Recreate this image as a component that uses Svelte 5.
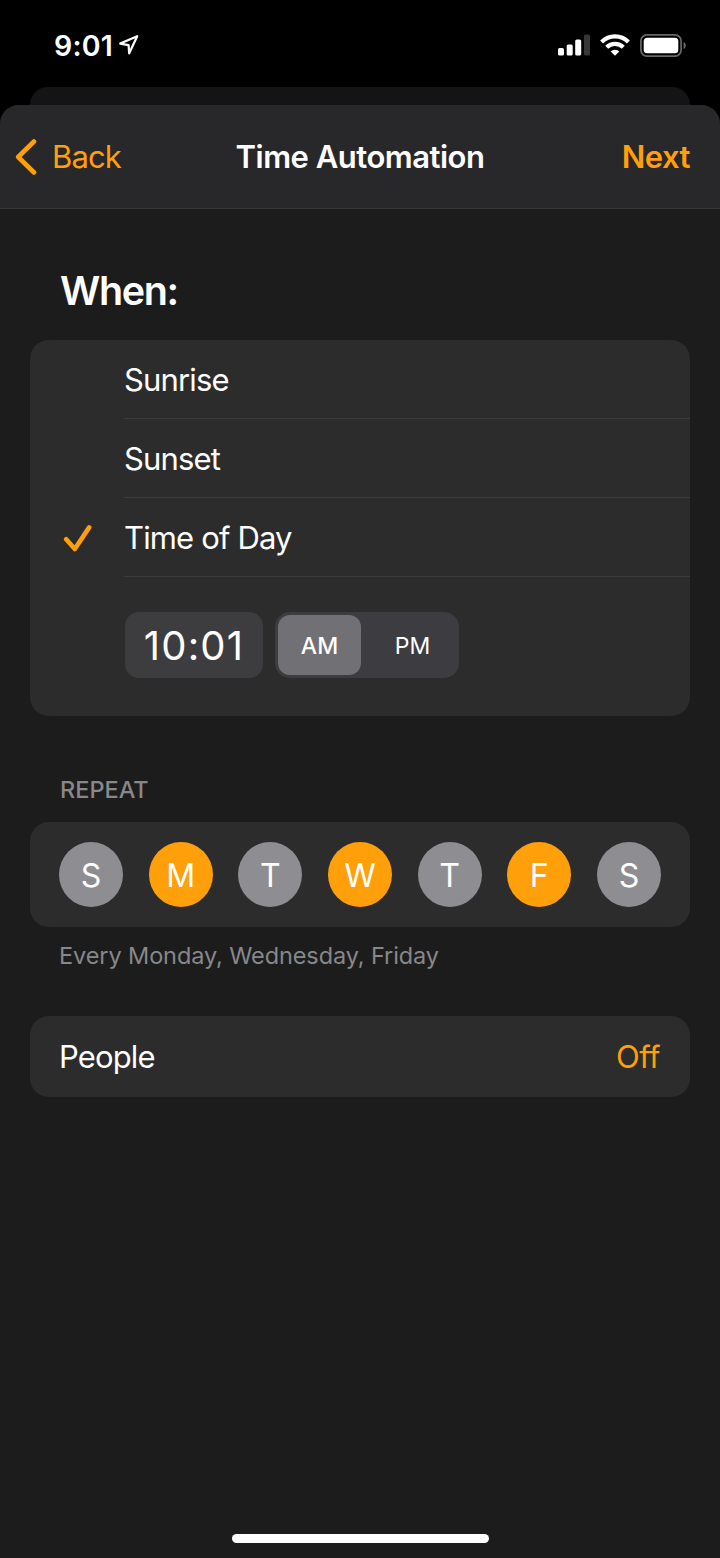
<script lang="ts">
  const options = [
    { id: "sunrise", label: "Sunrise" },
    { id: "sunset", label: "Sunset" },
    { id: "time", label: "Time of Day" },
  ];

  let selected = $state("time");
  let period = $state("AM");
  let days = $state([
    { letter: "S", name: "Sunday", on: false },
    { letter: "M", name: "Monday", on: true },
    { letter: "T", name: "Tuesday", on: false },
    { letter: "W", name: "Wednesday", on: true },
    { letter: "T", name: "Thursday", on: false },
    { letter: "F", name: "Friday", on: true },
    { letter: "S", name: "Saturday", on: false },
  ]);

  let summary = $derived(
    "Every " + days.filter((day) => day.on).map((day) => day.name).join(", ")
  );
</script>

<div class="screen">
  <div class="status">
    <div class="clock">
      <span>9:01</span>
      <svg class="location" width="22" height="22" viewBox="0 0 22 22">
        <path d="M19.2 2.2 2.2 9.6l8.4 1.5.6 8.2z" />
      </svg>
    </div>
    <div class="indicators">
      <svg width="32" height="22" viewBox="0 0 32 22" fill="#fff">
        <rect x="0" y="14" width="6" height="7.5" rx="1.6" />
        <rect x="8.7" y="10.5" width="6" height="11" rx="1.6" />
        <rect x="17.2" y="5.5" width="6" height="16" rx="1.6" />
        <rect x="26" y="0.5" width="6" height="21" rx="1.6" fill="#373737" />
      </svg>
      <svg class="wifi" width="30" height="22" viewBox="0 0 30 22">
        <path d="M1.6 8a19 19 0 0 1 26.8 0" />
        <path d="M6.7 13.2a11.8 11.8 0 0 1 16.6 0" />
        <path class="dot" d="M10.7 17.4a6.2 6.2 0 0 1 8.6 0L15 21.8z" />
      </svg>
      <svg class="battery" width="46" height="23" viewBox="0 0 46 23">
        <rect x="0.9" y="0.9" width="40.2" height="21.2" rx="6" fill="none" stroke="#686868" stroke-width="1.7" />
        <rect x="3.7" y="3.7" width="34.6" height="15.6" rx="3.6" fill="#fff" />
        <path d="M43.6 8c2.9 1 2.9 6 0 7z" fill="#686868" />
      </svg>
    </div>
  </div>

  <div class="behind"></div>

  <div class="sheet">
    <header>
      <button class="back">
        <svg width="24" height="38" viewBox="0 0 24 38">
          <path d="M19 3.5 3.2 19 19 34.5" />
        </svg>
        <span>Back</span>
      </button>
      <h1>Time Automation</h1>
      <button class="next">Next</button>
    </header>

    <main>
      <h2>When:</h2>
      <section class="card">
        {#each options as option}
          <button class="option" onclick={() => (selected = option.id)}>
            <span class="mark">
              {#if selected === option.id}
                <svg width="30" height="30" viewBox="0 0 30 30">
                  <path d="M3.2 16.3 11.8 26 26.2 4.4" />
                </svg>
              {/if}
            </span>
            <span class="label">{option.label}</span>
          </button>
        {/each}
        <div class="picker">
          <div class="time">10:01</div>
          <div class="segments">
            {#each ["AM", "PM"] as value}
              <button class:active={period === value} onclick={() => (period = value)}>{value}</button>
            {/each}
          </div>
        </div>
      </section>

      <h3>REPEAT</h3>
      <section class="card days">
        {#each days as day}
          <button class="day" class:on={day.on} onclick={() => (day.on = !day.on)}>{day.letter}</button>
        {/each}
      </section>
      <p class="summary">{summary}</p>

      <section class="card people">
        <span>People</span>
        <span class="value">Off</span>
      </section>
    </main>

    <div class="home"></div>
  </div>
</div>

<style>
  :global(body) {
    margin: 0;
    background: #000;
  }

  .screen {
    display: flex;
    flex-direction: column;
    width: 720px;
    height: 1558px;
    overflow: hidden;
    background: #000;
    color: #fff;
    font-family: Inter, "Liberation Sans", sans-serif;
    font-size: 31px;
  }

  button {
    border: 0;
    padding: 0;
    background: none;
    color: inherit;
    font: inherit;
    letter-spacing: inherit;
  }

  svg {
    display: block;
    flex: none;
  }

  .status {
    display: flex;
    justify-content: space-between;
    box-sizing: border-box;
    height: 87px;
    padding: 29px 34px 0 54px;
  }

  .clock {
    display: flex;
    gap: 5px;
    height: 34px;
    line-height: 34px;
    font-size: 28.5px;
    font-weight: 600;
    letter-spacing: 0.2px;
  }

  .location {
    margin-top: 5px;
    fill: none;
    stroke: #fff;
    stroke-width: 2.2;
    stroke-linejoin: round;
  }

  .indicators {
    display: flex;
    gap: 10px;
    padding-top: 5px;
  }

  .wifi {
    fill: none;
    stroke: #fff;
    stroke-width: 4.2;
  }

  .wifi .dot {
    fill: #fff;
    stroke: none;
  }

  .behind {
    height: 18px;
    margin: 0 30px;
    border-radius: 18px 18px 0 0;
    background: #141414;
  }

  .sheet {
    display: flex;
    flex: 1;
    flex-direction: column;
    border-radius: 19px 19px 0 0;
    background: #1c1c1c;
    overflow: hidden;
  }

  header {
    display: grid;
    grid-template-columns: 1fr auto 1fr;
    align-items: center;
    box-sizing: border-box;
    height: 104px;
    padding: 0 30px;
    border-bottom: 1px solid #363637;
    background: #28282a;
    letter-spacing: -0.5px;
  }

  .back {
    display: flex;
    align-items: center;
    gap: 13px;
    margin-left: -15px;
    color: #ff9f0a;
    letter-spacing: -0.9px;
  }

  .back svg path,
  .mark path {
    fill: none;
    stroke: #ff9f0a;
    stroke-width: 4.6;
    stroke-linecap: round;
    stroke-linejoin: round;
  }

  h1,
  h2,
  h3,
  p {
    margin: 0;
  }

  h1 {
    font-size: 31px;
    font-weight: 600;
  }

  .next {
    justify-self: end;
    color: #ff9f0a;
    font-weight: 600;
  }

  main {
    flex: 1;
    padding: 0 30px;
  }

  h2 {
    padding: 59px 30px 25px;
    line-height: 47px;
    font-size: 39.5px;
    font-weight: 600;
    letter-spacing: -1.4px;
  }

  .card {
    border-radius: 19px;
    background: #2c2c2c;
  }

  .option {
    display: flex;
    width: 100%;
    height: 79px;
    text-align: left;
    letter-spacing: -0.85px;
  }

  .mark {
    width: 61px;
    padding: 25px 0 0 33px;
  }

  .label {
    flex: 1;
    height: 78px;
    border-bottom: 1px solid #3b3b3c;
    line-height: 80px;
  }

  .picker {
    display: flex;
    gap: 12px;
    padding: 35px 0 38px 95px;
  }

  .time {
    width: 138px;
    height: 66px;
    border-radius: 14px;
    background: #3d3d3f;
    line-height: 68px;
    font-size: 40px;
    letter-spacing: 1.2px;
    text-align: center;
  }

  .segments {
    display: flex;
    box-sizing: border-box;
    width: 184px;
    height: 66px;
    padding: 3px;
    border-radius: 15px;
    background: #3d3c40;
  }

  .segments button {
    flex: 1;
    padding: 1px 0 0 8px;
    border-radius: 12px;
    font-size: 23px;
  }

  .segments .active {
    flex: 0 0 83px;
    padding: 1px 0 0;
    background: #717075;
    font-weight: 500;
  }

  h3 {
    padding: 59px 30px 17px;
    line-height: 30px;
    font-size: 23.5px;
    font-weight: 500;
    color: #88878b;
  }

  .days {
    display: flex;
    justify-content: space-between;
    align-items: center;
    height: 105px;
    padding: 0 29px;
  }

  .day {
    width: 64px;
    height: 65px;
    padding-top: 2px;
    border-radius: 50%;
    background: #8e8d92;
    font-size: 32px;
  }

  .day.on {
    background: #ff9f0a;
  }

  .summary {
    padding: 14px 29px 45px;
    line-height: 30px;
    font-size: 23.5px;
    letter-spacing: -0.1px;
    color: #88878b;
  }

  .people {
    display: flex;
    justify-content: space-between;
    height: 81px;
    padding: 0 30px 0 29px;
    line-height: 82px;
    letter-spacing: -0.85px;
  }

  .value {
    color: #ff9f0a;
    letter-spacing: -0.5px;
  }

  .home {
    width: 257px;
    height: 9px;
    margin: 0 auto 15px;
    border-radius: 5px;
    background: #fff;
  }
</style>
